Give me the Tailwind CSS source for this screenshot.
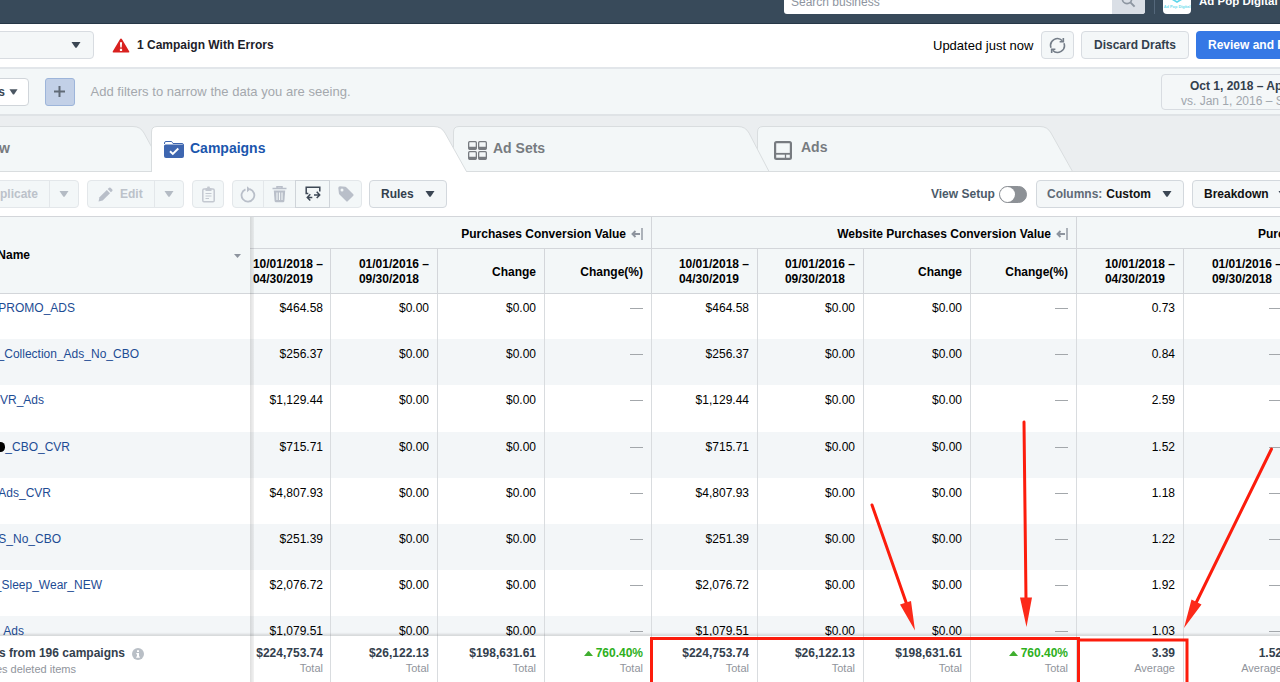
<!doctype html>
<html lang="en">
  <head>
    <meta charset="UTF-8" />
    <meta name="viewport" content="width=device-width, initial-scale=1.0" />
    <title>Ads Manager - Campaigns</title>
    <script src="https://cdn.jsdelivr.net/npm/@tailwindcss/browser@4"></script>
  </head>
  <body class="overflow-hidden bg-white">
    <div class="relative flex flex-col w-[1280px] h-[682px] overflow-hidden bg-white text-xs text-black font-['Liberation_Sans',Arial,sans-serif]">
      <!-- top bar -->
      <header class="flex items-end shrink-0 h-6 pl-[784px] pb-[9px] bg-[#384a5a] border-b border-[#263746]">
        <div class="flex items-end shrink-0 w-[361px] h-[26px] rounded-[3px] overflow-hidden bg-white">
          <span class="grow pl-[7px] pb-1 text-[12px] leading-[15px] text-[#8d949e]">Search business</span>
          <span class="flex justify-center items-end w-[33px] h-full pb-1.5 bg-[#dadfe6]">
            <svg class="w-[15px] h-[15px]" viewBox="0 0 15 15" fill="none" stroke="#8d96a1" stroke-width="1.7">
              <circle cx="6" cy="6" r="4.6" />
              <path d="M9.4 9.4L13.6 13.6" stroke-width="2" />
            </svg>
          </span>
        </div>
        <div class="shrink-0 w-px h-4 ml-[9px] bg-[#55687b]"></div>
        <div class="relative flex justify-center shrink-0 w-[28px] h-[28px] ml-2 rounded bg-white">
          <svg class="w-[28px] h-[28px]" viewBox="0 0 28 28">
            <path d="M8 12.5L14 16L20 12.5" fill="none" stroke="#5fd6ea" stroke-width="1.6" />
            <path d="M11 11H17L14 13.5Z" fill="#7fe0ef" />
            <text x="14" y="21.500" text-anchor="middle" font-size="3.9" font-weight="bold" fill="#6fdcec">Ad Pop Digital</text>
          </svg>
        </div>
        <span class="shrink-0 ml-2 pb-[5px] text-[11.5px] leading-[15px] font-bold text-white whitespace-nowrap">Ad Pop Digital</span>
      </header>

      <!-- account row -->
      <div class="flex items-center shrink-0 h-[45px] pb-px border-b-2 border-[#e2e6ea] whitespace-nowrap">
        <div class="flex items-center justify-end shrink-0 w-[95px] h-[28px] -ml-px pr-3 rounded-r-sm border border-[#d8dce1] bg-[#f4f7f8]">
          <svg class="w-2.5 h-1.5" viewBox="0 0 10 6"><path d="M0.5 0H9.5L5.8 5.4Q5 6 4.2 5.4Z" fill="#3b4653" /></svg>
        </div>
        <svg class="shrink-0 w-[18px] h-[15px] ml-[18px]" viewBox="0 0 18 15">
          <path d="M9 0.5Q9.6 0.5 10 1.2L17.3 13.4Q17.7 14.5 16.5 14.5H1.5Q0.3 14.5 0.7 13.4L8 1.2Q8.4 0.5 9 0.5Z" fill="#d9211f" />
          <path d="M7.9 4.2H10.1L9.7 9.6H8.3ZM7.9 10.8H10.1V12.9H7.9Z" fill="#fff" />
        </svg>
        <span class="shrink-0 w-[803px] pl-[7px] font-bold text-[#1d2129]">1 Campaign With Errors</span>
        <span class="shrink-0 w-[101px] pt-0.5 text-[13px]">Updated just now</span>
        <div class="flex justify-center items-center shrink-0 w-[33px] h-[28px] ml-[7px] rounded-sm border border-[#d8dce1] bg-[#f4f7f8]">
          <svg class="w-[17px] h-[17px]" viewBox="0 0 16 16" fill="none" stroke="#747d88" stroke-width="1.5">
            <path d="M1.900 10.100A6.400 6.400 0 0 1 12.600 3.600M14.100 5.900A6.400 6.400 0 0 1 3.400 12.400" />
            <path d="M13.500 0.900V4.400H10M2.500 15.100V11.600H6" />
          </svg>
        </div>
        <div class="flex justify-center items-center shrink-0 w-[108px] h-[28px] ml-[7px] rounded-sm border border-[#d8dce1] bg-[#f4f7f8] font-bold text-[#33404d]">Discard Drafts</div>
        <div class="flex items-center shrink-0 w-[150px] h-[28px] ml-[7px] pl-3 rounded-sm bg-[#3578e5] font-bold text-white">Review and Publish</div>
      </div>

      <!-- filter row -->
      <div class="flex items-center shrink-0 h-[47px] border-b-2 border-[#dfe3e6] bg-[#f3f7f8] whitespace-nowrap">
        <div class="flex items-center justify-end shrink-0 w-[30px] h-[28px] -ml-px pr-[10px] rounded-r-sm border border-[#d0d5da] bg-white font-bold text-[#3b4653]">
          Filters
          <svg class="shrink-0 w-[9px] h-1.5 ml-1" viewBox="0 0 10 6"><path d="M0.5 0H9.5L5.8 5.4Q5 6 4.2 5.4Z" fill="#4b5662" /></svg>
        </div>
        <div class="flex justify-center items-center shrink-0 w-[30px] h-[28px] ml-[15.5px] rounded-[3px] border border-[#9db5da] bg-[#c2d0e7]">
          <svg class="w-[11px] h-[11px]" viewBox="0 0 11 11"><path d="M5.5 0V11M0 5.5H11" stroke="#606a77" stroke-width="2" /></svg>
        </div>
        <span class="shrink-0 w-[1086.5px] pl-4 pt-px text-[13px] tracking-[0.03px] text-[#a4a8ad]">Add filters to narrow the data you are seeing.</span>
        <div class="flex flex-col justify-center shrink-0 w-[240px] h-[36px] rounded-sm border border-[#d8dce1] bg-[#f4f7f8] leading-[15px]">
          <span class="pl-7 pt-1 font-bold text-[#33404d]">Oct 1, 2018 – Apr 30, 2019</span>
          <span class="pl-[19px] text-[#a0a6ad]">vs. Jan 1, 2016 – Sep 30, 2018</span>
        </div>
      </div>

      <!-- level tabs -->
      <div class="relative flex shrink-0 h-[56px] bg-[#ebeef0] text-sm font-bold text-[#777b80] whitespace-nowrap">
        <svg class="absolute inset-0 w-[1280px] h-[56px]" viewBox="0 0 1280 56" fill="#f3f7f8" stroke="#d9dddf">
          <path d="M757.5 55.5V16Q757.5 10.5 763 10.5H1040Q1047.5 10.5 1051 17L1072.500 55.500Z" />
          <path d="M453.5 55.500V16Q453.500 10.500 459 10.500H738Q745.500 10.500 749 17L769 55.500Z" />
          <path d="M-5 55.500V10.500H133Q140.500 10.500 144 17L165 55.500Z" />
          <path d="M0 55.500H1280" />
          <path d="M151.500 57V16Q151.500 10.500 157 10.500H434Q441.500 10.500 445 17L466.500 55.500V57Z" fill="#fff" />
        </svg>
        <div class="relative flex items-center justify-end w-[10px] pt-2">Account Overview</div>
        <div class="relative flex items-center w-[304px] ml-[154px] pt-2 text-[#1b56ad]">
          <svg class="w-5 h-[18px] mr-1.5 mt-1" viewBox="0 0 20 18">
            <path d="M0.500 3V2Q0.500 0.500 2 0.500H7Q8 0.500 8.500 1.500L9 2.500H18Q19.500 2.500 19.500 4V5" fill="none" stroke="#3e66b0" />
            <path d="M0 5Q0 3.500 1.500 3.500H18.500Q20 3.500 20 5V15Q20 17 18 17H2Q0 17 0 15Z" fill="#3e66b0" />
            <path d="M6 10.300L8.800 13L14.300 7.500" fill="none" stroke="#fff" stroke-width="1.900" />
          </svg>
          Campaigns
        </div>
        <div class="relative flex items-center w-[306px] pt-2">
          <svg class="w-[19px] h-[19px] mr-1.5 mt-1" viewBox="0 0 19 19" fill="none" stroke="#777b80" stroke-width="1.300">
            <rect x="0.650" y="0.650" width="7.700" height="7.700" rx="1" />
            <rect x="10.650" y="0.650" width="7.700" height="7.700" rx="1" />
            <rect x="0.650" y="10.650" width="7.700" height="7.700" rx="1" />
            <rect x="10.650" y="10.650" width="7.700" height="7.700" rx="1" />
            <path d="M1 7H8M11 7H18M1 17H8M11 17H18" stroke-width="2.600" />
          </svg>
          Ad Sets
        </div>
        <div class="relative flex items-center pt-1.5">
          <svg class="w-[18px] h-[19px] mr-[9px] mt-1.5" viewBox="0 0 18 19" fill="none" stroke="#777b80" stroke-width="2.200">
            <path d="M2.500 1.100H15.500Q16.900 1.100 16.900 2.500V16.500Q16.900 17.900 15.500 17.900H2.500Q1.100 17.900 1.100 16.500V2.500Q1.100 1.100 2.500 1.100Z" />
            <path d="M1 12.800H17" stroke-width="1.800" />
            <path d="M11.500 13V18" stroke-width="1.300" />
          </svg>
          Ads
        </div>
      </div>

      <!-- toolbar -->
      <div class="flex items-center shrink-0 h-[44px] bg-white font-bold text-[#33404d] whitespace-nowrap">
        <div class="flex shrink-0 w-[80px] h-[28px] -ml-px rounded-r-sm border border-[#e3e7ea] bg-[#f3f7f8] text-[#bcc2ca]">
          <span class="flex items-center justify-end w-[50px] pr-[11px] border-r border-[#e3e7ea]">Duplicate</span>
          <span class="flex grow justify-center items-center"><svg class="w-2.5 h-1.5" viewBox="0 0 10 6"><path d="M0.5 0H9.5L5.8 5.4Q5 6 4.2 5.4Z" fill="#b4bbc4" /></svg></span>
        </div>
        <div class="flex shrink-0 w-[97px] h-[28px] ml-2 rounded-sm border border-[#e3e7ea] bg-[#f3f7f8] text-[#bcc2ca]">
          <span class="flex items-center w-[67px] pl-2.5 border-r border-[#e3e7ea]">
            <svg class="w-[15px] h-[15px] mr-[7px]" viewBox="0 0 15 15" fill="#b9bfc9">
              <path d="M0.500 14.500L1.500 10.300L8.800 3L12 6.200L4.700 13.500Z" />
              <path d="M9.700 2.100L11.100 0.700Q11.800 0.200 12.500 0.700L14.300 2.500Q14.800 3.200 14.300 3.900L12.900 5.300Z" />
            </svg>
            Edit
          </span>
          <span class="flex grow justify-center items-center"><svg class="w-2.5 h-1.5" viewBox="0 0 10 6"><path d="M0.5 0H9.5L5.8 5.4Q5 6 4.2 5.4Z" fill="#b4bbc4" /></svg></span>
        </div>
        <div class="flex justify-center items-center shrink-0 w-[32px] h-[28px] ml-2 rounded-sm border border-[#e3e7ea] bg-[#f3f7f8]">
          <svg class="w-[13px] h-[17px]" viewBox="0 0 13 17" fill="none" stroke="#c3c8d0">
            <path d="M2 3H11Q12.200 3 12.200 4.200V14.500Q12.200 15.800 11 15.800H2Q0.800 15.800 0.800 14.500V4.200Q0.800 3 2 3Z" stroke-width="1.500" />
            <path d="M3.500 2H5L5.500 0.500H7.500L8 2H9.500V5H3.500Z" fill="#c3c8d0" stroke="none" />
            <path d="M3.500 7.500H9.500M3.500 10H9.500M3.500 12.500H7" />
          </svg>
        </div>
        <div class="flex shrink-0 w-[130px] h-[28px] ml-2 rounded-sm border border-[#e3e7ea] bg-[#f3f7f8]">
          <span class="flex justify-center items-center w-[31px] border-r border-[#e3e7ea]">
            <svg class="w-4 h-[17px]" viewBox="0 0 16 17">
              <path d="M5.500 3.300A6.400 6.400 0 1 0 9.800 3.100" fill="none" stroke="#b9bfc9" stroke-width="1.800" />
              <path d="M7 0.300V6.300L10.500 3.300Z" fill="#b9bfc9" />
            </svg>
          </span>
          <span class="flex justify-center items-center w-[31px]">
            <svg class="w-[15px] h-[17px]" viewBox="0 0 15 17">
              <path d="M0.500 2.600H14.500M5 2V0.800H10V2" fill="none" stroke="#b9bfc9" stroke-width="1.500" />
              <path d="M1.800 4.500H13.200L12.400 15Q12.300 16.300 11 16.300H4Q2.700 16.300 2.600 15Z" fill="#b9bfc9" />
              <path d="M5 6.500V14M7.500 6.500V14M10 6.500V14" stroke="#f3f7f8" stroke-width="1.100" />
            </svg>
          </span>
          <span class="flex justify-center items-center w-[35px] -my-px border border-[#cfd4d9]">
            <svg class="w-4 h-4" viewBox="0 0 16 16" fill="none" stroke="#3d4855" stroke-width="1.500">
              <path d="M3.300 7.500H1.200V1.200H14.800V5.500" />
              <path d="M5.300 8.300L2.300 11.400L5.300 14.500M2.500 11.400H7.300M11.700 5.800L14.700 8.900L11.700 12M14.500 8.900H9" />
            </svg>
          </span>
          <span class="flex justify-center items-center grow">
            <svg class="w-4 h-4" viewBox="0 0 16 16">
              <path d="M0.300 2Q0.300 0.300 2 0.300L7.300 0.800Q8 0.900 8.500 1.400L15.300 8.300Q16 9 15.300 9.700L9.700 15.300Q9 16 8.300 15.300L1.500 8.500Q1 8 0.900 7.300Z" fill="#b9bfc9" />
              <circle cx="4" cy="4" r="1.500" fill="#f3f7f8" />
            </svg>
          </span>
        </div>
        <div class="flex items-center shrink-0 w-[78px] h-[28px] ml-[7px] pl-[11px] rounded-sm border border-[#d3d8dd] bg-[#f4f7f8]">
          Rules
          <svg class="w-2.5 h-1.5 ml-[11px]" viewBox="0 0 10 6"><path d="M0.5 0H9.5L5.8 5.4Q5 6 4.2 5.4Z" fill="#3b4653" /></svg>
        </div>
        <span class="shrink-0 w-[68px] ml-[484px] text-[#4b5a69]">View Setup</span>
        <div class="flex items-center shrink-0 w-[28px] h-[17px] rounded-full bg-[#8d9196] border border-[#8d9196]"><span class="w-[15px] h-[15px] rounded-full bg-white"></span></div>
        <div class="flex items-center shrink-0 w-[148px] h-[28px] ml-[9px] pl-2.5 rounded-sm border border-[#d3d8dd] bg-[#f4f7f8]">
          <span class="text-[#606a76]">Columns:</span>
          <span class="pl-1 text-[#111]">Custom</span>
          <svg class="w-2.5 h-1.5 ml-[11px]" viewBox="0 0 10 6"><path d="M0.5 0H9.5L5.8 5.4Q5 6 4.2 5.4Z" fill="#3b4653" /></svg>
        </div>
        <div class="flex items-center shrink-0 w-[110px] h-[28px] ml-2 pl-[11px] rounded-sm border border-[#d3d8dd] bg-[#f4f7f8] text-[#111]">
          Breakdown
          <svg class="w-2.5 h-1.5 ml-[9px]" viewBox="0 0 10 6"><path d="M0.5 0H9.5L5.8 5.4Q5 6 4.2 5.4Z" fill="#3b4653" /></svg>
        </div>
      </div>

      <!-- table header -->
      <div class="relative z-10 flex shrink-0 h-[78px] border-y border-[#d3d6da] bg-[#f3f7f8] font-bold whitespace-nowrap">
        <div class="flex justify-between items-center shrink-0 w-[250px] pr-[9px]">
          <span class="w-[30px] flex justify-end">Campaign Name</span>
          <svg class="w-[7px] h-1 mt-0.5" viewBox="0 0 7 4"><path d="M0 0H7L3.500 4Z" fill="#8d949e" /></svg>
        </div>
        <div class="shrink-0 w-[1041px]">
          <div class="grid grid-cols-[402px_425px_214px] h-[32px] border-b border-[#d3d6da]">
            <div class="flex items-center justify-end pr-2 pt-0.5 border-r border-[#d3d6da]">
              Purchases Conversion Value
              <svg class="w-3 h-3 ml-[5px]" viewBox="0 0 12 12" fill="none" stroke="#8d949e" stroke-width="1.900"><path d="M11 0V12" stroke-width="1.400" /><path d="M9 6H1.500M4.500 3L1.500 6L4.500 9" /></svg>
            </div>
            <div class="flex items-center justify-end pr-2 pt-0.5 border-r border-[#d3d6da]">
              Website Purchases Conversion Value
              <svg class="w-3 h-3 ml-[5px]" viewBox="0 0 12 12" fill="none" stroke="#8d949e" stroke-width="1.900"><path d="M11 0V12" stroke-width="1.400" /><path d="M9 6H1.500M4.500 3L1.500 6L4.500 9" /></svg>
            </div>
            <div class="flex items-center pl-[181px] pt-0.5">Purchase ROAS</div>
          </div>
          <div id="column-heads" class="grid grid-cols-[81px_107px_107px_107px_106px_106px_107px_106px_107px_107px] h-[44px] leading-[15px]"></div>
        </div>
      </div>

      <!-- campaign rows -->
      <div id="rows" class="grow min-h-0 -mt-px overflow-hidden"></div>

      <!-- totals -->
      <div class="flex shrink-0 h-[46px] bg-white shadow-[0_-1px_2px_1px_rgba(0,0,0,0.12)] z-10 leading-[15px] whitespace-nowrap">
        <div class="flex flex-col shrink-0 w-[250px] pt-2.5">
          <div class="flex items-center">
            <span class="flex justify-end w-[125px] font-bold text-[#33404d]">Results from 196 campaigns</span>
            <svg class="w-3 h-3 ml-[7px]" viewBox="0 0 12 12"><circle cx="6" cy="6" r="6" fill="#b9bfc6" /><path d="M5 2.200H7V4H5ZM4.300 5H7V8.500H7.800V9.700H4.200V8.500H5V6.200H4.300Z" fill="#fff" /></svg>
          </div>
          <span class="flex justify-end w-[76px] pt-px text-[11px] text-[#90949c]">Excludes deleted items</span>
        </div>
        <div id="totals" class="grid grid-cols-[81px_107px_107px_107px_106px_106px_107px_106px_107px_107px] shrink-0 w-[1041px]"></div>
      </div>

      <!-- edge of the frozen name column -->
      <div class="absolute z-20 left-[250px] top-[217px] w-[4px] h-[465px] bg-gradient-to-r from-black/13 to-black/5"></div>

      <!-- annotations over the table -->
      <svg class="absolute z-30 inset-0 w-[1280px] h-[682px]" viewBox="0 0 1280 682" fill="none" stroke="#fc1c0c" stroke-width="3">
        <path d="M651.500 690V638.500H1078.500V690" />
        <path d="M1079 640H1187V690" />
        <path d="M872 505L907 605M1024 422L1026 600M1271.500 449L1195 605" stroke-linecap="round" />
        <path d="M915 630.500L900 604.500L911 601ZM1026.500 627L1020 597.500H1032ZM1184 628L1191.500 599.500L1201.500 604.500Z" fill="#fc2a1a" stroke="none" />
      </svg>
    </div>

    <script>
      const before = "10/01/2018 –<br />04/30/2019";
      const after = "01/01/2016 –<br />09/30/2018";
      const heads = [before, after, "Change", "Change(%)", before, after, "Change", "Change(%)", before, after];
      document.getElementById("column-heads").innerHTML = heads
        .map((text, i) => `<div class="flex items-center justify-end pt-0.5 ${i ? "pr-2" : "pr-[7px]"} border-r border-[#d3d6da]"><span>${text}</span></div>`)
        .join("");

      // name, x where the visible part of the name ends, value, roas
      const campaigns = [
        ["PROMO_ADS", 75, "$464.58", "0.73"],
        ["_Collection_Ads_No_CBO", 139, "$256.37", "0.84"],
        ["CVR_Ads", 44, "$1,129.44", "2.59"],
        ["_CBO_CVR", 70, "$715.71", "1.52"],
        ["Ads_CVR", 51, "$4,807.93", "1.18"],
        ["S_No_CBO", 61, "$251.39", "1.22"],
        ["_Sleep_Wear_NEW", 102, "$2,076.72", "1.92"],
        ["_Ads", 24, "$1,079.51", "1.03"],
      ];
      const dash = `<span class="w-[13px] h-px mt-[7px] bg-[#a3a7ab]"></span>`;
      document.getElementById("rows").innerHTML = campaigns
        .map(([name, end, value, roas], i) => {
          const cells = [value, "$0.00", "$0.00", dash, value, "$0.00", "$0.00", dash, roas, dash]
            .map((cell, j) => `<div class="flex items-start justify-end ${j ? "pr-2" : "pr-[7px]"} pt-2 border-r border-[#d9dcdf]">${cell}</div>`)
            .join("");
          const blot = i === 3 ? `<span class="absolute -left-1 top-[10px] w-[9px] h-2.5 rounded-full bg-black"></span>` : "";
          return `<div class="relative flex h-[46.2px] leading-[15px] whitespace-nowrap ${i % 2 ? "bg-[#f3f6f8]" : "bg-white"}">
            <div class="shrink-0 w-[250px] pt-2 text-[#1d4c94]"><div class="flex justify-end" style="width: ${end}px">${name}</div></div>
            <div class="grid grid-cols-[81px_107px_107px_107px_106px_106px_107px_106px_107px_107px] shrink-0 w-[1041px]">${cells}</div>${blot}
          </div>`;
        })
        .join("");

      const growth = `<span class="flex items-center text-[#2db01c]"><svg class="w-[9px] h-[5px] mr-[3px]" viewBox="0 0 9 5"><path d="M0 5L3.800 0.400Q4.500 -0.200 5.200 0.400L9 5Z" fill="#3fae2f" /></svg>760.40%</span>`;
      const totals = ["$224,753.74", "$26,122.13", "$198,631.61", growth, "$224,753.74", "$26,122.13", "$198,631.61", growth, "3.39", "1.52"];
      document.getElementById("totals").innerHTML = totals
        .map(
          (text, i) => `<div class="flex flex-col items-end ${i ? "pr-2" : "pr-[7px]"} pt-2.5 border-r border-[#d9dcdf]">
            <span class="font-bold text-[#33404d]">${text}</span>
            <span class="text-[11px] text-[#90949c]">${i < 8 ? "Total" : "Average"}</span>
          </div>`
        )
        .join("");
    </script>
  </body>
</html>
